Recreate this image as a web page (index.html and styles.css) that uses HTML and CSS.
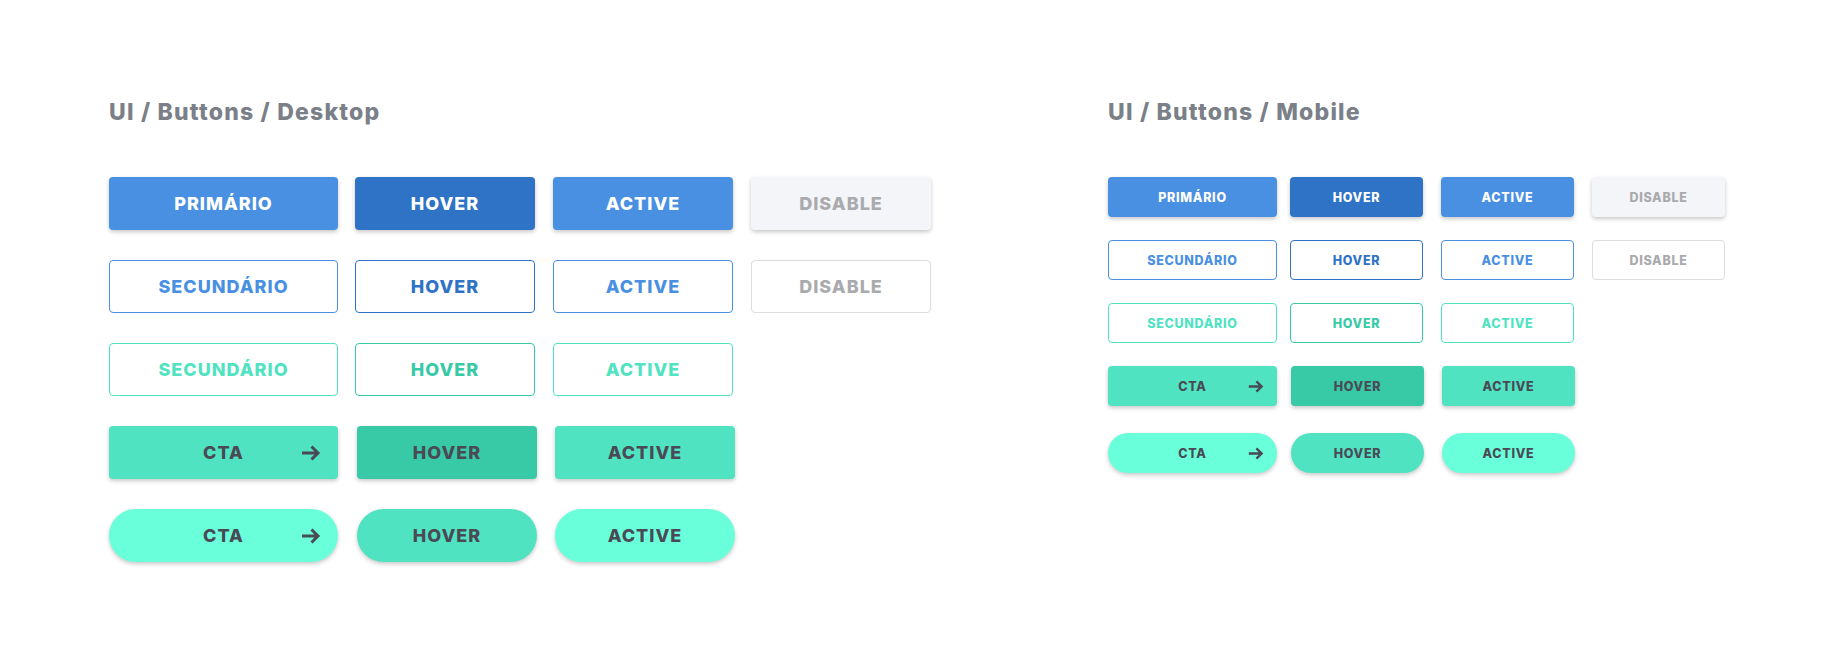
FILE: index.html
```html
<!DOCTYPE html>
<html lang="pt">
<head>
<meta charset="utf-8">
<title>UI / Buttons</title>
<link rel="stylesheet" href="styles.css">
</head>
<body>
<main class="page">
  <section class="set desktop">
    <h2 class="title">UI / Buttons / Desktop</h2>
    <div class="rows">
      <div class="row">
        <button class="btn solid-blue w-first">PRIMÁRIO</button>
        <button class="btn solid-blue-dark">HOVER</button>
        <button class="btn solid-blue">ACTIVE</button>
        <button class="btn solid-disabled">DISABLE</button>
      </div>
      <div class="row">
        <button class="btn line-blue w-first">SECUNDÁRIO</button>
        <button class="btn line-blue-dark">HOVER</button>
        <button class="btn line-blue">ACTIVE</button>
        <button class="btn line-disabled">DISABLE</button>
      </div>
      <div class="row">
        <button class="btn line-teal w-first">SECUNDÁRIO</button>
        <button class="btn line-teal-dark">HOVER</button>
        <button class="btn line-teal">ACTIVE</button>
      </div>
      <div class="row row-shift">
        <button class="btn solid-teal w-first">CTA<svg class="arrow" viewBox="0 0 20 16"><path d="M1 8h16M10.5 1.5L17 8l-6.5 6.5" fill="none" stroke="currentColor" stroke-width="3" stroke-linecap="butt" stroke-linejoin="miter"/></svg></button>
        <button class="btn solid-teal-dark">HOVER</button>
        <button class="btn solid-teal">ACTIVE</button>
      </div>
      <div class="row row-shift">
        <button class="btn pill pill-aqua w-first">CTA<svg class="arrow" viewBox="0 0 20 16"><path d="M1 8h16M10.5 1.5L17 8l-6.5 6.5" fill="none" stroke="currentColor" stroke-width="3" stroke-linecap="butt" stroke-linejoin="miter"/></svg></button>
        <button class="btn pill pill-teal">HOVER</button>
        <button class="btn pill pill-aqua">ACTIVE</button>
      </div>
    </div>
  </section>

  <section class="set mobile">
    <h2 class="title">UI / Buttons / Mobile</h2>
    <div class="rows">
      <div class="row">
        <button class="btn solid-blue w-first">PRIMÁRIO</button>
        <button class="btn solid-blue-dark">HOVER</button>
        <button class="btn solid-blue">ACTIVE</button>
        <button class="btn solid-disabled">DISABLE</button>
      </div>
      <div class="row">
        <button class="btn line-blue w-first">SECUNDÁRIO</button>
        <button class="btn line-blue-dark">HOVER</button>
        <button class="btn line-blue">ACTIVE</button>
        <button class="btn line-disabled">DISABLE</button>
      </div>
      <div class="row">
        <button class="btn line-teal w-first">SECUNDÁRIO</button>
        <button class="btn line-teal-dark">HOVER</button>
        <button class="btn line-teal">ACTIVE</button>
      </div>
      <div class="row row-shift">
        <button class="btn solid-teal w-first">CTA<svg class="arrow" viewBox="0 0 20 16"><path d="M1 8h16M10.5 1.5L17 8l-6.5 6.5" fill="none" stroke="currentColor" stroke-width="3" stroke-linecap="butt" stroke-linejoin="miter"/></svg></button>
        <button class="btn solid-teal-dark">HOVER</button>
        <button class="btn solid-teal">ACTIVE</button>
      </div>
      <div class="row row-shift row-last">
        <button class="btn pill pill-aqua w-first">CTA<svg class="arrow" viewBox="0 0 20 16"><path d="M1 8h16M10.5 1.5L17 8l-6.5 6.5" fill="none" stroke="currentColor" stroke-width="3" stroke-linecap="butt" stroke-linejoin="miter"/></svg></button>
        <button class="btn pill pill-teal">HOVER</button>
        <button class="btn pill pill-aqua">ACTIVE</button>
      </div>
    </div>
  </section>
</main>
</body>
</html>
```

FILE: styles.css
```css
* { box-sizing: border-box; }

html, body {
  margin: 0;
  padding: 0;
  background: #ffffff;
}

body {
  font-family: "Inter", "Lato", "Liberation Sans", sans-serif;
  width: 1841px;
  height: 663px;
  overflow: hidden;
}

.page {
  display: flex;
  align-items: flex-start;
  padding: 98px 0 0 109px;
  gap: 177px;
}

.title {
  margin: 0;
  font-family: "Inter", "Lato", sans-serif;
  font-size: 23px;
  line-height: 28px;
  font-weight: 800;
  color: #7b8088;
  letter-spacing: 1.2px;
}

.rows {
  display: flex;
  flex-direction: column;
}

.row {
  display: flex;
}

.btn {
  position: relative;
  display: flex;
  align-items: center;
  justify-content: center;
  border: 0;
  padding: 0;
  margin: 0;
  font-family: "Inter", "Lato", "Liberation Sans", sans-serif;
  font-weight: 800;
  text-transform: uppercase;
  cursor: pointer;
  border-radius: 4px;
}

.arrow {
  position: absolute;
  top: 50%;
}

/* ---------- Desktop sizes ---------- */
.desktop { width: 822px; }
.desktop .title { margin-bottom: 51px; }
.desktop .rows { gap: 30px; }
.desktop .row { gap: 18px; }
.desktop .btn {
  width: 180px;
  height: 53px;
  font-size: 18px;
  letter-spacing: 1px;
}
.desktop .btn.w-first { width: 229px; margin-right: -1px; }
.desktop .row-shift .btn.w-first { margin-right: 1px; }
.desktop .arrow {
  width: 20px;
  height: 16px;
  right: 17px;
  margin-top: -8px;
}
.desktop .pill { border-radius: 27px; }

/* ---------- Mobile sizes ---------- */
.mobile .title { margin-bottom: 51px; }
.mobile .rows { gap: 23px; }
.mobile .row { gap: 18px; }
.mobile .row-last { margin-top: 4px; }
.mobile .btn {
  width: 133px;
  height: 40px;
  font-size: 12.5px;
  letter-spacing: 0.7px;
}
.mobile .btn.w-first { width: 169px; margin-right: -5px; }
.mobile .row-shift .btn.w-first { margin-right: -4px; }
.mobile .arrow {
  width: 16px;
  height: 13px;
  right: 13px;
  margin-top: -6.5px;
}
.mobile .pill { border-radius: 20px; }

/* ---------- Variants ---------- */
.solid-blue {
  background: #4a90e2;
  color: #ffffff;
  box-shadow: 0 2px 4px rgba(0, 0, 0, 0.22);
}
.solid-blue-dark {
  background: #2e73c5;
  color: #ffffff;
  box-shadow: 0 2px 4px rgba(0, 0, 0, 0.22);
}
.solid-disabled {
  background: #f4f5f8;
  color: #a9aaae;
  box-shadow: 0 2px 4px rgba(0, 0, 0, 0.22);
}

.line-blue {
  background: #ffffff;
  border: 1px solid #4a90e2;
  color: #4a90e2;
}
.line-blue-dark {
  background: #ffffff;
  border: 1px solid #2e73c5;
  color: #2e73c5;
}
.line-disabled {
  background: #ffffff;
  border: 1px solid #dcdde0;
  color: #a9aaae;
}

.line-teal {
  background: #ffffff;
  border: 1px solid #50e3c2;
  color: #50e3c2;
}
.line-teal-dark {
  background: #ffffff;
  border: 1px solid #38c9a6;
  color: #38c9a6;
}

.solid-teal {
  background: #50e3c2;
  color: #4a4a55;
  box-shadow: 0 2px 4px rgba(0, 0, 0, 0.22);
}
.solid-teal-dark {
  background: #38c9a6;
  color: #4a4a55;
  box-shadow: 0 2px 4px rgba(0, 0, 0, 0.22);
}

.pill-aqua {
  background: #69ffda;
  color: #4a4a55;
  box-shadow: 0 2px 4px rgba(0, 0, 0, 0.22);
}
.pill-teal {
  background: #50e3c2;
  color: #4a4a55;
  box-shadow: 0 2px 4px rgba(0, 0, 0, 0.22);
}
```
